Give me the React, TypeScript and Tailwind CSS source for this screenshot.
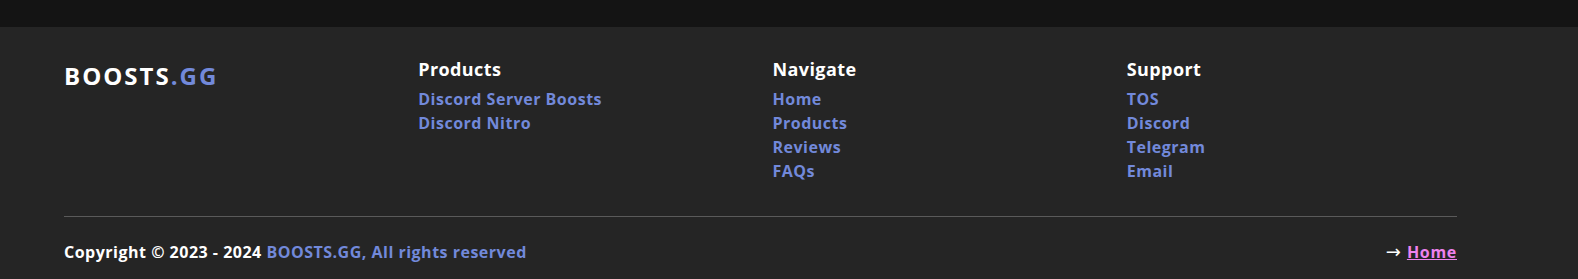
const columns = [
  { title: 'Products', links: ['Discord Server Boosts', 'Discord Nitro'] },
  { title: 'Navigate', links: ['Home', 'Products', 'Reviews', 'FAQs'] },
  { title: 'Support', links: ['TOS', 'Discord', 'Telegram', 'Email'] },
];

const App = () => {
  return (
    <div className="min-h-[279px] bg-[#252525] font-['Open_Sans',sans-serif] font-bold">
      <div className="h-[27px] bg-[#141414]" />
      <footer className="pl-16 pt-7 pb-[15px]">
        <div className="w-[1393px]">
          <div className="grid grid-cols-4 gap-6">
            <div className="mt-[5px] text-[24px] leading-8 text-white tracking-[2px]">
              BOOSTS<span className="text-[#7289da]">.GG</span>
            </div>
            {columns.map((col) => (
              <div key={col.title} className="flex flex-col">
                <h3 className="text-[18px] leading-7 text-white tracking-[0.4px]">{col.title}</h3>
                <ul className="mt-1 flex flex-col">
                  {col.links.map((link) => (
                    <li key={link}>
                      <a href="#" className="text-[16px] leading-6 text-[#7289da] tracking-[0.5px]">
                        {link}
                      </a>
                    </li>
                  ))}
                </ul>
              </div>
            ))}
          </div>
          <div className="mt-[33px] h-px bg-[#5a5a5a]" />
          <div className="mt-[23px] flex items-center justify-between text-[16px] leading-6 tracking-[0.5px]">
            <p className="text-white">
              Copyright © 2023 - 2024 <span className="text-[#7289da]">BOOSTS.GG, All rights reserved</span>
            </p>
            <p className="flex items-center text-white">
              <span className="mr-[6px] font-['DejaVu_Sans',sans-serif] font-normal text-[18px] tracking-normal">→</span>
              <a href="#" className="text-[#ee82ee] underline tracking-[0.7px]">Home</a>
            </p>
          </div>
        </div>
      </footer>
    </div>
  );
};

export default App;
